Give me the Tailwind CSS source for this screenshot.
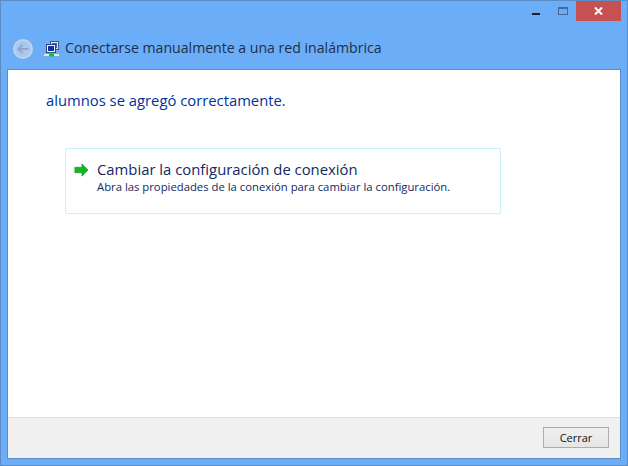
<!DOCTYPE html>
<html lang="es">
<head>
    <meta charset="UTF-8">
    <script src="https://cdn.jsdelivr.net/npm/@tailwindcss/browser@4"></script>
    <title>Conectarse manualmente a una red inalámbrica</title>
</head>

<body class="w-[628px] h-[466px] overflow-hidden font-['Open_Sans',sans-serif]">
    <div class="w-full h-full flex flex-col bg-[#6badf6] border border-[#5b8cc6]">

        <!-- title bar -->
        <div class="h-[20px] flex justify-end items-start pr-[6px] shrink-0">
            <button class="w-[26px] h-[20px] flex justify-center items-end pb-[6px]">
                <span class="block w-[8px] h-[2px] bg-[#222]"></span>
            </button>
            <button class="w-[27px] h-[20px] flex justify-center items-start pt-[6px]">
                <span class="block w-[10px] h-[8px] border border-[#44689a] border-t-2"></span>
            </button>
            <button class="w-[45px] h-[20px] bg-[#c75050] flex justify-center items-center">
                <svg width="9" height="8" viewBox="0 0 9 8"><path d="M1 0.5 L8 7.5 M8 0.5 L1 7.5" stroke="#fff" stroke-width="2"/></svg>
            </button>
        </div>

        <!-- nav row -->
        <div class="h-[48px] flex items-center pl-[12px] pt-[7px] shrink-0">
            <div class="w-[20px] h-[20px] rounded-full bg-[#a9c8ec] border-2 border-[#bdd3ee] flex items-center justify-center">
                <svg width="12" height="10" viewBox="0 0 12 10"><path d="M5.5 1 L1.5 5 L5.5 9 M2 5 H11.5" fill="none" stroke="#8ea9c9" stroke-width="2"/></svg>
            </div>
            <svg class="ml-[11px]" width="16" height="16" viewBox="0 0 16 16">
                <rect x="6.5" y="0.5" width="8" height="8" fill="#dfe8f4" stroke="#3b5a94"/>
                <rect x="8" y="2" width="5" height="5" fill="#3d62c0"/>
                <rect x="2.5" y="3.5" width="9" height="8" fill="#eef2f8" stroke="#33436f"/>
                <rect x="4" y="5" width="6" height="5" fill="#0f2fa8"/>
                <rect x="5.5" y="11.5" width="4" height="2" fill="#1fc25a"/>
                <rect x="0" y="13" width="15" height="2" fill="#e3e8e4"/>
                <rect x="5" y="13" width="5" height="2.5" fill="#16b550"/>
            </svg>
            <span class="ml-[5px] text-[14.1px] text-[#1d2f4c] leading-none">Conectarse manualmente a una red inalámbrica</span>
        </div>

        <!-- content -->
        <div class="w-[614px] h-[390px] ml-[6px] flex flex-col bg-white border border-[#5b8cc6]">
            <div class="flex-1 pl-[38px] pt-[20px]">
                <p class="text-[14.8px] leading-[20px] text-[#003399]">alumnos se agregó correctamente.</p>
                <div class="mt-[38px] w-[436px] h-[66px] ml-[19px] border border-[#c7f1fb] rounded-[2px] flex items-start pl-[7px] pt-[10px]">
                    <svg class="mt-[3px] shrink-0" width="16" height="16" viewBox="0 0 16 16">
                        <path d="M0 4 H8 V0.5 L16 8 L8 15.5 V12 H0 Z" fill="#999" opacity="0.22"/>
                        <path d="M2 5.5 H9 V2 L15 8 L9 14 V10.5 H2 Z" fill="#10b826" stroke="#0b8f20" stroke-width="0.6"/>
                    </svg>
                    <div class="ml-[8px]">
                        <div class="text-[14.85px] leading-[20px] text-[#12295e]">Cambiar la configuración de conexión</div>
                        <div class="text-[11.3px] leading-[15px] text-[#12295e]">Abra las propiedades de la conexión para cambiar la configuración.</div>
                    </div>
                </div>
            </div>
            <div class="h-[41px] shrink-0 bg-[#f0f0f0] border-t border-[#dfdfdf] flex justify-end items-start pt-[9px] pr-[11px]">
                <button class="w-[66px] h-[21px] border border-[#acacac] bg-gradient-to-b from-[#f0f0f0] to-[#e5e5e5] text-[11px] leading-none text-[#111]">Cerrar</button>
            </div>
        </div>
    </div>
</body>
</html>
